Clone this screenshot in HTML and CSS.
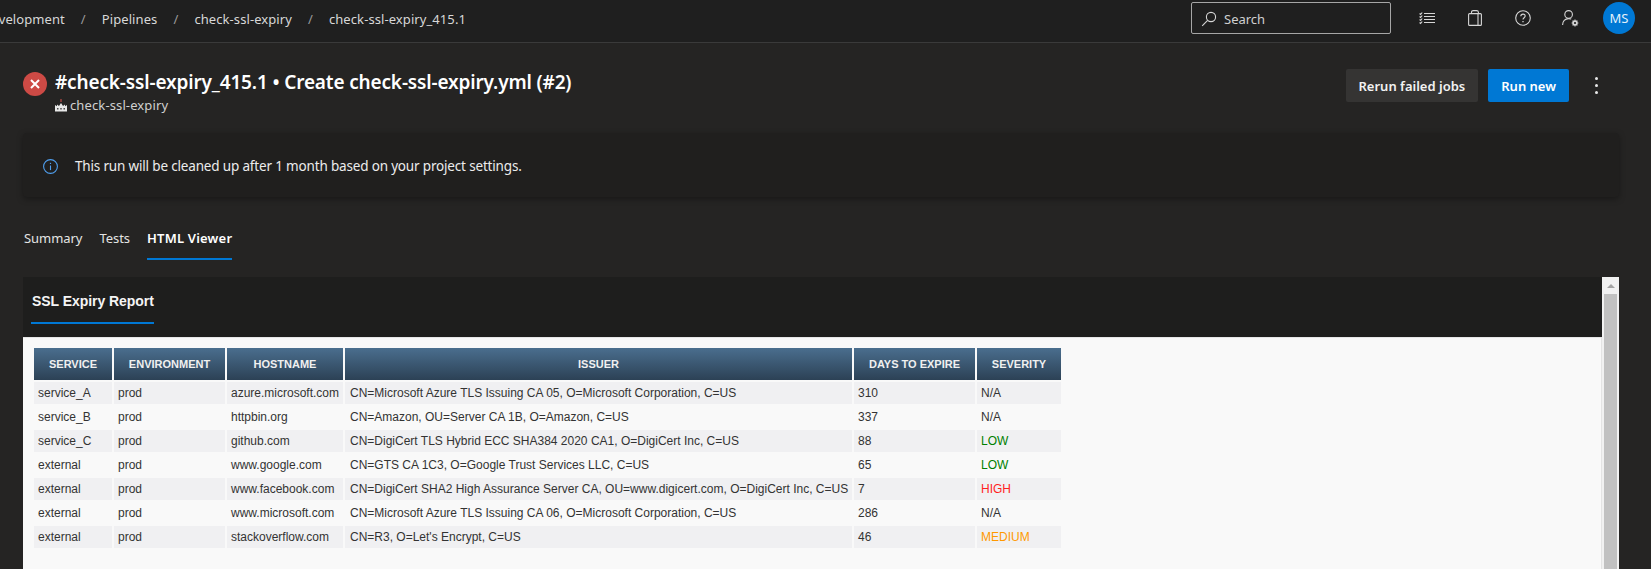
FILE: index.html
```html
<!DOCTYPE html>
<html lang="en">
<head>
	<meta charset="UTF-8">
	<title>check-ssl-expiry_415.1</title>
	<link rel="stylesheet" href="styles.css">
</head>
<body>
<header class="topbar">
	<nav class="crumbs">
		<a class="crumb first">Development</a><span class="sep">/</span>
		<a class="crumb">Pipelines</a><span class="sep">/</span>
		<a class="crumb">check-ssl-expiry</a><span class="sep">/</span>
		<a class="crumb">check-ssl-expiry_415.1</a>
	</nav>
	<div class="search">
		<svg class="search-icon" width="16" height="16" viewBox="0 0 16 16" fill="none" stroke="#d6d6d6" stroke-width="1.1"><circle cx="10" cy="6" r="4.6"/><path d="M6.6 9.4 1.2 14.8"/></svg>
		<span>Search</span>
	</div>
	<div class="top-icons">
		<svg class="ti-list" width="16" height="13" viewBox="0 0 16 13" fill="none" stroke="#d6d6d6" stroke-width="1.1"><path d="M5 1.5h11M5 4.5h11M5 7.5h11M5 10.5h11"/><path d="M.6 1.5l1 1 1.6-2M.6 4.5l1 1 1.6-2M.6 7.5l1 1 1.6-2M.6 10.5l1 1 1.6-2"/></svg>
		<svg class="ti-bag" width="14" height="16" viewBox="0 0 14 16" fill="none" stroke="#d6d6d6" stroke-width="1.1"><rect x="0.6" y="3.6" width="12.8" height="11.8" rx="1"/><path d="M3.5 3.6V2.2C3.5 1.2 4.2 .6 5.2 .6h3.4c1 0 1.8.6 1.8 1.6v1.4M10 3.6v11.8"/></svg>
		<svg class="ti-help" width="16" height="16" viewBox="0 0 16 16" fill="none" stroke="#d6d6d6" stroke-width="1.1"><circle cx="8" cy="8" r="7.3"/><path d="M5.8 6.2C5.8 4.9 6.8 4.1 8 4.1s2.2.8 2.2 2c0 1.7-2.2 1.7-2.2 3.5"/><path d="M8 11.1v1.2" stroke-width="1.3"/></svg>
		<svg class="ti-user" width="17" height="17" viewBox="0 0 17 17" fill="none" stroke="#d6d6d6" stroke-width="1.1"><circle cx="6.6" cy="4.4" r="3.8"/><path d="M.6 15c0-3.6 2.4-6.4 6-6.4 1 0 1.8.2 2.6.5"/><circle cx="13" cy="13" r="1.9" stroke-width="1.6"/><path d="M13 9.6v1.2M13 15.2v1.2M9.6 13h1.2M15.2 13h1.2M10.6 10.6l.8.8M14.6 14.6l.8.8M15.4 10.6l-.8.8M11.4 14.6l-.8.8"/></svg>
		<div class="avatar">MS</div>
	</div>
</header>

<main class="content">
	<div class="run-head">
		<div class="run-status">
			<svg width="10" height="10" viewBox="0 0 10 10" stroke="#fff" stroke-width="2" fill="none"><path d="M1 1l8 8M9 1 1 9"/></svg>
		</div>
		<div class="run-title">
			<h1>#check-ssl-expiry_415.1 • Create check-ssl-expiry.yml (#2)</h1>
			<div class="run-pipe">
				<svg width="12" height="13" viewBox="0 0 12 13"><path d="M5.5 0h1v3h-1z" fill="#d9534f"/><path d="M0 12.5V6l2 1.3V5.6l2 1.4L6 4l2 3 2-1.4v1.7L12 6v6.5z" fill="#e8e8e8"/><path d="M2.2 9h1.2v1.6H2.2zM5.4 9h1.2v1.6H5.4zM8.6 9h1.2v1.6H8.6z" fill="#252423"/></svg>
				<span>check-ssl-expiry</span>
			</div>
		</div>
		<div class="run-actions">
			<button class="btn">Rerun failed jobs</button>
			<button class="btn primary">Run new</button>
			<div class="kebab"><i></i><i></i><i></i></div>
		</div>
	</div>

	<div class="banner">
		<svg width="15" height="15" viewBox="0 0 15 15" fill="none" stroke="#4f9fee" stroke-width="1.1"><circle cx="7.5" cy="7.5" r="6.9"/><path d="M7.5 6.5v4.6"/><path d="M7.5 3.8v1.2" stroke-width="1.2"/></svg>
		<span>This run will be cleaned up after 1 month based on your project settings.</span>
	</div>

	<div class="tabs">
		<a class="tab">Summary</a>
		<a class="tab">Tests</a>
		<a class="tab active">HTML Viewer</a>
	</div>

	<section class="viewer">
		<div class="report">
			<div class="report-head">
				<div class="report-tab">SSL Expiry Report</div>
			</div>
			<div class="report-body">
				<table class="ssl">
					<thead>
						<tr>
							<th class="c-service">SERVICE</th>
							<th class="c-env">ENVIRONMENT</th>
							<th class="c-host">HOSTNAME</th>
							<th class="c-issuer">ISSUER</th>
							<th class="c-days">DAYS TO EXPIRE</th>
							<th class="c-sev">SEVERITY</th>
						</tr>
					</thead>
					<tbody>
						<tr><td>service_A</td><td>prod</td><td>azure.microsoft.com</td><td>CN=Microsoft Azure TLS Issuing CA 05, O=Microsoft Corporation, C=US</td><td>310</td><td>N/A</td></tr>
						<tr><td>service_B</td><td>prod</td><td>httpbin.org</td><td>CN=Amazon, OU=Server CA 1B, O=Amazon, C=US</td><td>337</td><td>N/A</td></tr>
						<tr><td>service_C</td><td>prod</td><td>github.com</td><td>CN=DigiCert TLS Hybrid ECC SHA384 2020 CA1, O=DigiCert Inc, C=US</td><td>88</td><td class="low">LOW</td></tr>
						<tr><td>external</td><td>prod</td><td>www.google.com</td><td>CN=GTS CA 1C3, O=Google Trust Services LLC, C=US</td><td>65</td><td class="low">LOW</td></tr>
						<tr><td>external</td><td>prod</td><td>www.facebook.com</td><td>CN=DigiCert SHA2 High Assurance Server CA, OU=www.digicert.com, O=DigiCert Inc, C=US</td><td>7</td><td class="high">HIGH</td></tr>
						<tr><td>external</td><td>prod</td><td>www.microsoft.com</td><td>CN=Microsoft Azure TLS Issuing CA 06, O=Microsoft Corporation, C=US</td><td>286</td><td>N/A</td></tr>
						<tr><td>external</td><td>prod</td><td>stackoverflow.com</td><td>CN=R3, O=Let's Encrypt, C=US</td><td>46</td><td class="medium">MEDIUM</td></tr>
					</tbody>
				</table>
			</div>
		</div>
		<div class="scrollbar">
			<div class="scroll-up"></div>
			<div class="scroll-thumb"></div>
		</div>
	</section>
</main>
</body>
</html>
```

FILE: styles.css
```css
* {
	margin: 0;
	padding: 0;
	box-sizing: border-box;
}
html, body {
	height: 569px;
	overflow: hidden;
}
body {
	background: #252423;
	color: #e8e8e8;
	font-family: "Noto Sans", "Liberation Sans", sans-serif;
	display: flex;
	flex-direction: column;
}

/* top bar */
.topbar {
	height: 43px;
	flex: none;
	background: #1f1f1f;
	border-bottom: 1px solid #3a3a3a;
	display: flex;
	align-items: flex-start;
	overflow: hidden;
}
.crumbs {
	display: flex;
	align-items: center;
	height: 38px;
	font-size: 13px;
	letter-spacing: 0.08px;
	margin-left: -18px;
	color: #d8d8d8;
}
.crumb {
	white-space: nowrap;
}
.sep {
	width: 37px;
	text-align: center;
	color: #9a9a9a;
}
.search {
	width: 200px;
	height: 32px;
	margin: 2px 0 0 auto;
	border: 1px solid #a6a6a6;
	border-radius: 2px;
	display: flex;
	align-items: center;
	gap: 7px;
	padding: 1px 0 0 9px;
	font-size: 13px;
	color: #d0d0d0;
}
.top-icons {
	display: flex;
	align-items: center;
	height: 32px;
	margin: 2px 16px 0 0;
}
.ti-list {
	margin-left: 28px;
}
.ti-bag {
	margin-left: 33px;
}
.ti-help {
	margin-left: 33px;
}
.ti-user {
	margin-left: 31px;
}
.avatar {
	width: 32px;
	height: 32px;
	margin-left: 24px;
	border-radius: 50%;
	background: #0078d4;
	color: #e4f1fb;
	font-size: 13px;
	line-height: 32px;
	text-align: center;
}

/* page */
.content {
	flex: 1;
	min-height: 0;
	padding: 0 32px 0 23px;
	display: flex;
	flex-direction: column;
}
.run-head {
	display: flex;
	align-items: flex-start;
	margin-top: 26px;
	height: 64px;
}
.run-status {
	width: 24px;
	height: 24px;
	margin-top: 3px;
	border-radius: 50%;
	background: #cd4a45;
	display: flex;
	align-items: center;
	justify-content: center;
}
.run-title {
	margin-left: 8px;
}
.run-title h1 {
	font-size: 19px;
	line-height: 26px;
	font-weight: 600;
	letter-spacing: -0.15px;
	color: #fff;
}
.run-pipe {
	display: flex;
	align-items: center;
	gap: 3px;
	margin-top: 1px;
	font-size: 13px;
	line-height: 18px;
	letter-spacing: 0.12px;
	color: #d0d0d0;
}
.run-actions {
	margin-left: auto;
	margin-right: 7px;
	display: flex;
	align-items: center;
	gap: 10px;
}
.btn {
	height: 33px;
	padding: 0 13px;
	border: 0;
	border-radius: 2px;
	background: #353433;
	color: #f2f2f2;
	font-family: inherit;
	font-size: 13px;
	font-weight: 600;
}
.btn.primary {
	background: #0078d4;
	color: #fff;
}
.kebab {
	width: 32px;
	margin-left: 1px;
	display: flex;
	flex-direction: column;
	align-items: center;
	gap: 4px;
}
.kebab i {
	width: 3px;
	height: 3px;
	border-radius: 50%;
	background: #e8e8e8;
}
.banner {
	height: 64px;
	flex: none;
	background: #201f1e;
	border-radius: 4px;
	box-shadow: 0 2px 6px rgba(0,0,0,0.35);
	display: flex;
	align-items: center;
	gap: 17px;
	padding: 2px 0 0 20px;
	font-size: 13.5px;
	letter-spacing: -0.17px;
	color: #ececec;
}
.tabs {
	display: flex;
	gap: 17px;
	height: 63px;
	flex: none;
	padding: 29px 0 0 1px;
	font-size: 13px;
	letter-spacing: -0.05px;
	color: #e4e4e4;
}
.tab {
	height: 34px;
	line-height: 24px;
}
.tab.active {
	font-weight: 600;
	letter-spacing: 0.2px;
	color: #fff;
	border-bottom: 2px solid #0078d4;
}

/* html viewer frame */
.viewer {
	flex: 1;
	min-height: 0;
	display: flex;
	margin-top: 17px;
}
.report {
	flex: 1;
	display: flex;
	flex-direction: column;
	font-family: "Liberation Sans", Arial, sans-serif;
}
.report-head {
	height: 60px;
	flex: none;
	background: #1e1e1d;
	padding: 0 0 0 8px;
}
.report-tab {
	display: inline-block;
	height: 47px;
	padding: 0 0 0 1px;
	line-height: 48px;
	font-size: 14px;
	font-weight: bold;
	letter-spacing: -0.05px;
	color: #f5f5f5;
	border-bottom: 2px solid #0078d4;
}
.report-body {
	flex: 1;
	background: #f9f9f9;
	border-top: 1px solid #e6e6e6;
	border-right: 1px solid #e4e4e4;
	padding: 8px 0 0 9px;
}
.ssl {
	border-spacing: 2px;
	table-layout: fixed;
	width: 1031px;
	font-size: 12px;
	color: #333;
}
.ssl th {
	height: 32px;
	background: linear-gradient(#4a6e8e, #2c4155);
	color: #f0f0f0;
	font-size: 11px;
}
.ssl td {
	height: 22px;
	padding: 0 0 0 4px;
	white-space: nowrap;
}
.ssl td:nth-child(4) {
	padding-left: 5px;
}
.ssl tbody tr:nth-child(odd) td {
	background: #f0f0f2;
}
.c-service { width: 78px; }
.c-env { width: 111px; }
.c-host { width: 116px; }
.c-issuer { width: 507px; }
.c-days { width: 121px; }
.c-sev { width: 84px; }
.ssl td.low { color: #008000; }
.ssl td.high { color: #ff1f1f; }
.ssl td.medium { color: #ff9900; }

/* scrollbar of the frame */
.scrollbar {
	width: 17px;
	flex: none;
	background: #f1f1f1;
	display: flex;
	flex-direction: column;
	align-items: center;
}
.scroll-up {
	height: 17px;
	flex: none;
	display: flex;
	align-items: center;
	justify-content: center;
}
.scroll-up::before {
	content: "";
	border-left: 4px solid transparent;
	border-right: 4px solid transparent;
	border-bottom: 4px solid #a3a3a3;
}
.scroll-thumb {
	width: 13px;
	flex: 1;
	background: #c1c1c1;
}
```
